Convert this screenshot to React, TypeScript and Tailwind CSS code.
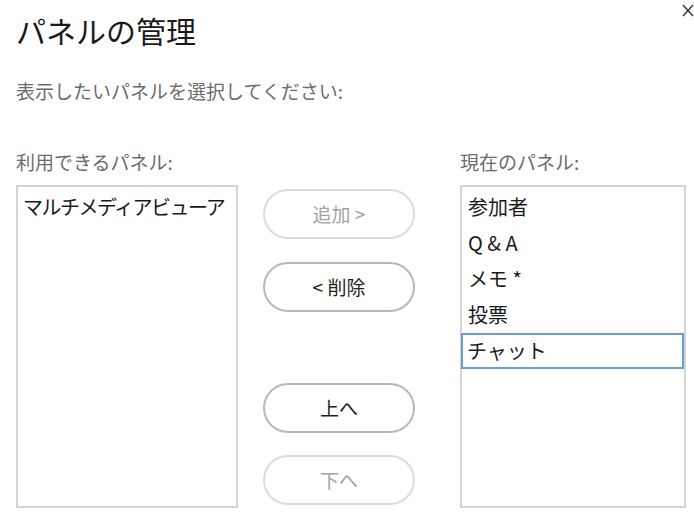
import React from "react";

const available = ["マルチメディアビューア"];
const current = ["参加者", "Q & A", "メモ *", "投票", "チャット"];
const selected = "チャット";

function PillButton({ label, disabled }: { label: string; disabled?: boolean }) {
    return (
        <button
            type="button"
            className={
                disabled
                    ? "h-[50px] w-[152px] rounded-full border-2 border-[#dcdcdc] bg-white text-[19px] text-[#a3a3a3]"
                    : "h-[50px] w-[152px] rounded-full border-2 border-[#b8b8b8] bg-white text-[19px] text-[#1f1f1f]"
            }
        >
            {label}
        </button>
    );
}

export default function App() {
    return (
        <div className="relative w-[694px] h-[512px] overflow-hidden bg-white pl-4 font-['Noto_Sans_CJK_JP','Noto_Sans',sans-serif]">
            {/* Close */}
            <button type="button" className="absolute top-[4px] right-0 text-[#333]">
                <svg width="12" height="13" viewBox="0 0 12 13" fill="none" stroke="currentColor" strokeWidth="1.4">
                    <path d="M1 1l10 11M11 1L1 12" />
                </svg>
            </button>

            {/* Header */}
            <h1 className="pt-[12px] text-[30px] leading-[36px] font-normal text-[#1a1a1a]">パネルの管理</h1>
            <p className="mt-[28px] text-[19px] leading-[30px] text-[#6b6b6b]">表示したいパネルを選択してください:</p>

            {/* Lists */}
            <div className="mt-[41px] flex">
                <div className="w-[222px] shrink-0">
                    <div className="h-[30px] text-[19px] leading-[30px] text-[#6b6b6b]">利用できるパネル:</div>
                    <div className="mt-[8px] h-[323px] border-2 border-[#d4d4d4] pt-[2px]">
                        {available.map((item) => (
                            <div key={item} className="h-[36px] pl-[5px] text-[20px] leading-[36px] tracking-[-1.5px] whitespace-nowrap text-[#1a1a1a]">
                                {item}
                            </div>
                        ))}
                    </div>
                </div>

                <div className="ml-[25px] flex shrink-0 flex-col pt-[42px]">
                    <PillButton label="追加 >" disabled />
                    <div className="mt-[23px]">
                        <PillButton label="< 削除" />
                    </div>
                    <div className="mt-[71px]">
                        <PillButton label="上へ" />
                    </div>
                    <div className="mt-[22px]">
                        <PillButton label="下へ" disabled />
                    </div>
                </div>

                <div className="ml-[45px] w-[226px] shrink-0">
                    <div className="h-[30px] text-[19px] leading-[30px] text-[#6b6b6b]">現在のパネル:</div>
                    <div className="mt-[8px] h-[323px] border-2 border-[#d4d4d4] pt-[2px]">
                        {current.map((item) =>
                            item === selected ? (
                                <div key={item} className="-ml-[1px] h-[36px] border-2 border-[#6c9bd9] pl-[4px] text-[20px] leading-[32px] text-[#1a1a1a]">
                                    {item}
                                </div>
                            ) : (
                                <div key={item} className="h-[36px] pl-[6px] text-[20px] leading-[36px] text-[#1a1a1a]">
                                    {item}
                                </div>
                            )
                        )}
                    </div>
                </div>
            </div>
        </div>
    );
}
